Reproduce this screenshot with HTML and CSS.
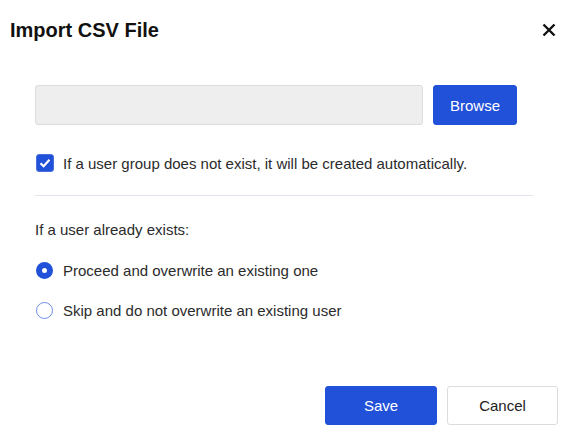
FILE: index.html
```html
<!DOCTYPE html>
<html lang="en">

<head>
  <meta charset="UTF-8" />
  <title>Import CSV File</title>
  <link rel="stylesheet" href="styles.css">
</head>

<body>
  <div class="dialog">
    <div class="dialog-header">
      <h2>Import CSV File</h2>
      <button type="button" class="close-btn" aria-label="Close">
        <svg width="14" height="14" viewBox="0 0 14 14">
          <path d="M1.5 1.5 L12.5 12.5 M12.5 1.5 L1.5 12.5" stroke="#111" stroke-width="2.4" stroke-linecap="butt" />
        </svg>
      </button>
    </div>

    <div class="dialog-body">
      <div class="file-row">
        <div class="file-input"></div>
        <button type="button" class="btn btn-primary browse">Browse</button>
      </div>

      <label class="check-row">
        <span class="checkbox">
          <svg width="12" height="10" viewBox="0 0 12 10">
            <path d="M1.5 5.2 L4.6 8.2 L10.5 1.8" fill="none" stroke="#fff" stroke-width="2.2" />
          </svg>
        </span>
        If a user group does not exist, it will be created automatically.
      </label>

      <hr class="divider" />

      <p class="question">If a user already exists:</p>

      <label class="radio-row">
        <span class="radio checked"></span>
        Proceed and overwrite an existing one
      </label>
      <label class="radio-row">
        <span class="radio"></span>
        Skip and do not overwrite an existing user
      </label>
    </div>

    <div class="dialog-footer">
      <button type="button" class="btn btn-primary footer-btn">Save</button>
      <button type="button" class="btn btn-default footer-btn cancel">Cancel</button>
    </div>
  </div>
</body>

</html>
```

FILE: styles.css
```css
* {
  margin: 0;
  padding: 0;
  box-sizing: border-box;
  font-family: "Liberation Sans", Arial, sans-serif;
}

body {
  background: #fff;
  color: #333;
}

.dialog {
  width: 569px;
  height: 437px;
  display: flex;
  flex-direction: column;
}

.dialog-header {
  display: flex;
  justify-content: space-between;
  align-items: center;
  padding: 0 12px 0 10px;
  height: 60px;
}

.dialog-header h2 {
  font-size: 20px;
  font-weight: 700;
  color: #111;
}

.close-btn {
  background: none;
  border: none;
  width: 16px;
  height: 16px;
  display: flex;
  align-items: center;
  justify-content: center;
  cursor: pointer;
}

.dialog-body {
  padding: 25px 36px 0 35px;
  flex: 1;
}

.file-row {
  display: flex;
  gap: 10px;
}

.file-input {
  width: 388px;
  height: 40px;
  background: #eeeeee;
  border: 1px solid #dcdcdc;
  border-radius: 3px;
}

.btn {
  border-radius: 3px;
  font-size: 15px;
  cursor: pointer;
}

.btn-primary {
  background: #2150d9;
  border: 1px solid #2150d9;
  color: #fff;
}

.btn-default {
  background: #fff;
  border: 1px solid #dcdcdc;
  color: #222;
}

.browse {
  width: 84px;
  height: 40px;
}

.check-row,
.radio-row {
  display: flex;
  align-items: center;
  gap: 9px;
  font-size: 15px;
  color: #2b2b2b;
  cursor: pointer;
}

.check-row {
  margin-top: 29px;
  padding-left: 1px;
}

.checkbox {
  width: 18px;
  height: 18px;
  border-radius: 3px;
  background: #2150d9;
  border: 1px solid #4a70e0;
  display: flex;
  align-items: center;
  justify-content: center;
}

.divider {
  border: none;
  border-top: 1px solid #e1e4ec;
  margin-top: 23px;
}

.question {
  font-size: 15px;
  color: #2b2b2b;
  margin-top: 25px;
}

.radio-row {
  margin-top: 24px;
  padding-left: 1px;
  gap: 10px;
}

.radio-row + .radio-row {
  margin-top: 23px;
}

.radio {
  width: 17px;
  height: 17px;
  border-radius: 50%;
  border: 1.5px solid #6d8ee8;
  background: #fff;
}

.radio.checked {
  border: 6px solid #2150d9;
}

.dialog-footer {
  display: flex;
  justify-content: flex-end;
  gap: 10px;
  padding: 0 11px 12px 0;
}

.footer-btn {
  width: 112px;
  height: 39px;
  font-size: 15px;
}

.footer-btn.cancel {
  width: 111px;
}
```
